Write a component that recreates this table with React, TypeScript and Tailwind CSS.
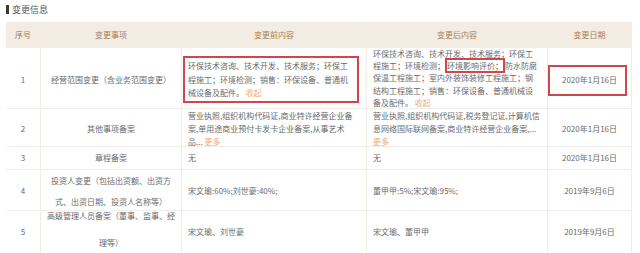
import React from "react";

const GRID = "grid grid-cols-[35px_141px_185px_181px_84px]";
const CELL = "border-r border-[#f1ede6] flex";
const LINK = "text-[#eeae78]";

function L({ children, cls = "" }: { children: React.ReactNode; cls?: string }) {
  return <span className={`block whitespace-nowrap ${cls}`}>{children}</span>;
}

export default function App() {
  return (
    <div className="w-[640px] h-[253px] bg-white overflow-hidden font-['Noto_Sans_CJK_SC',sans-serif] text-[8px] text-[#6a6a6a]">
      <div className="h-[22px] flex items-start pl-[6px] pt-[4px]">
        <div className="flex items-center gap-[3px]">
          <span className="block w-[3px] h-[9px] bg-[#3d3a36]" />
          <span className="text-[9px] leading-[11px] text-[#555]">变更信息</span>
        </div>
      </div>
      <div className="ml-[6px] w-[626px]">
        {/* header */}
        <div className={`${GRID} h-[26px] bg-[#f2ece2] text-[#a88059]`}>
          <div className={`${CELL} items-center justify-center border-[#ebe3d6]`}>序号</div>
          <div className={`${CELL} items-center justify-center border-[#ebe3d6]`}>变更事项</div>
          <div className={`${CELL} items-center justify-center border-[#ebe3d6]`}>变更前内容</div>
          <div className={`${CELL} items-center justify-center border-[#ebe3d6]`}>变更后内容</div>
          <div className={`${CELL} items-center justify-center border-[#ebe3d6]`}>变更日期</div>
        </div>
        {/* row 1 */}
        <div className={`${GRID} h-[61px] border-b border-[#f1efec]`}>
          <div className={`${CELL} items-center justify-center pt-[3px]`}>1</div>
          <div className={`${CELL} items-center justify-center pt-[3px]`}>经营范围变更（含业务范围变更）</div>
          <div className={`${CELL} items-start pt-[8px] pl-[1px]`}>
            <div className="w-[176px] h-[47px] border-2 border-[#d0464b] pl-[3px] pt-[1px] leading-[13.5px]">
              <L>环保技术咨询、技术开发、技术服务；环保工</L>
              <L>程施工；环境检测；销售：环保设备、普通机</L>
              <L>
                械设备及配件。 <span className={LINK}>收起</span>
              </L>
            </div>
          </div>
          <div className={`${CELL} flex-col justify-center pl-[6px] leading-[12.2px]`}>
            <L>环保技术咨询、技术开发、技术服务；环保工</L>
            <L>
              程施工；环境检测；
              <span className="border-2 border-[#d0464b] px-[0px]">环境影响评价；</span>
              防水防腐
            </L>
            <L>保温工程施工；室内外装饰装修工程施工；钢</L>
            <L>结构工程施工；销售：环保设备、普通机械设</L>
            <L>
              备及配件。 <span className={LINK}>收起</span>
            </L>
          </div>
          <div className={`${CELL} items-center pt-[3px]`}>
            <div className="w-[79px] h-[31px] border-2 border-[#d0464b] flex items-center justify-center pl-[4px]">
              2020年1月16日
            </div>
          </div>
        </div>
        {/* row 2 */}
        <div className={`${GRID} h-[38px] border-b border-[#f1efec]`}>
          <div className={`${CELL} items-center justify-center`}>2</div>
          <div className={`${CELL} items-center justify-center`}>其他事项备案</div>
          <div className={`${CELL} flex-col justify-center pl-[6px] leading-[13px]`}>
            <L>营业执照,组织机构代码证,商业特许经营企业备</L>
            <L>案,单用途商业预付卡发卡企业备案,从事艺术</L>
            <L>
              品... <span className={LINK}>更多</span>
            </L>
          </div>
          <div className={`${CELL} flex-col justify-center pl-[6px] leading-[13px]`}>
            <L>营业执照,组织机构代码证,税务登记证,计算机信</L>
            <L>息网络国际联网备案,商业特许经营企业备案,...</L>
            <L cls={LINK}>更多</L>
          </div>
          <div className={`${CELL} items-center justify-center`}>2020年1月16日</div>
        </div>
        {/* row 3 */}
        <div className={`${GRID} h-[23px] border-b border-[#f1efec]`}>
          <div className={`${CELL} items-center justify-center`}>3</div>
          <div className={`${CELL} items-center justify-center`}>章程备案</div>
          <div className={`${CELL} items-center pl-[6px]`}>无</div>
          <div className={`${CELL} items-center pl-[6px]`}>无</div>
          <div className={`${CELL} items-center justify-center`}>2020年1月16日</div>
        </div>
        {/* row 4 */}
        <div className={`${GRID} h-[41px] border-b border-[#f1efec]`}>
          <div className={`${CELL} items-center justify-center`}>4</div>
          <div className={`${CELL} flex-col items-center justify-center leading-[21px]`}>
            <L>投资人变更（包括出资额、出资方</L>
            <L>式、出资日期、投资人名称等）</L>
          </div>
          <div className={`${CELL} items-center pl-[6px]`}>宋文瑜:60%;刘世豪:40%;</div>
          <div className={`${CELL} items-center pl-[6px]`}>董甲甲:5%;宋文瑜:95%;</div>
          <div className={`${CELL} items-center justify-center`}>2019年9月6日</div>
        </div>
        {/* row 5 */}
        <div className={`${GRID} h-[42px]`}>
          <div className={`${CELL} items-center justify-center`}>5</div>
          <div className={`${CELL} flex-col items-center justify-start leading-[10px]`}>
            <L>高级管理人员备案（董事、监事、经</L>
            <L cls="mt-[17px]">理等）</L>
          </div>
          <div className={`${CELL} items-center pl-[6px]`}>宋文瑜、刘世豪</div>
          <div className={`${CELL} items-center pl-[6px]`}>宋文瑜、董甲甲</div>
          <div className={`${CELL} items-center justify-center`}>2019年9月6日</div>
        </div>
      </div>
    </div>
  );
}
